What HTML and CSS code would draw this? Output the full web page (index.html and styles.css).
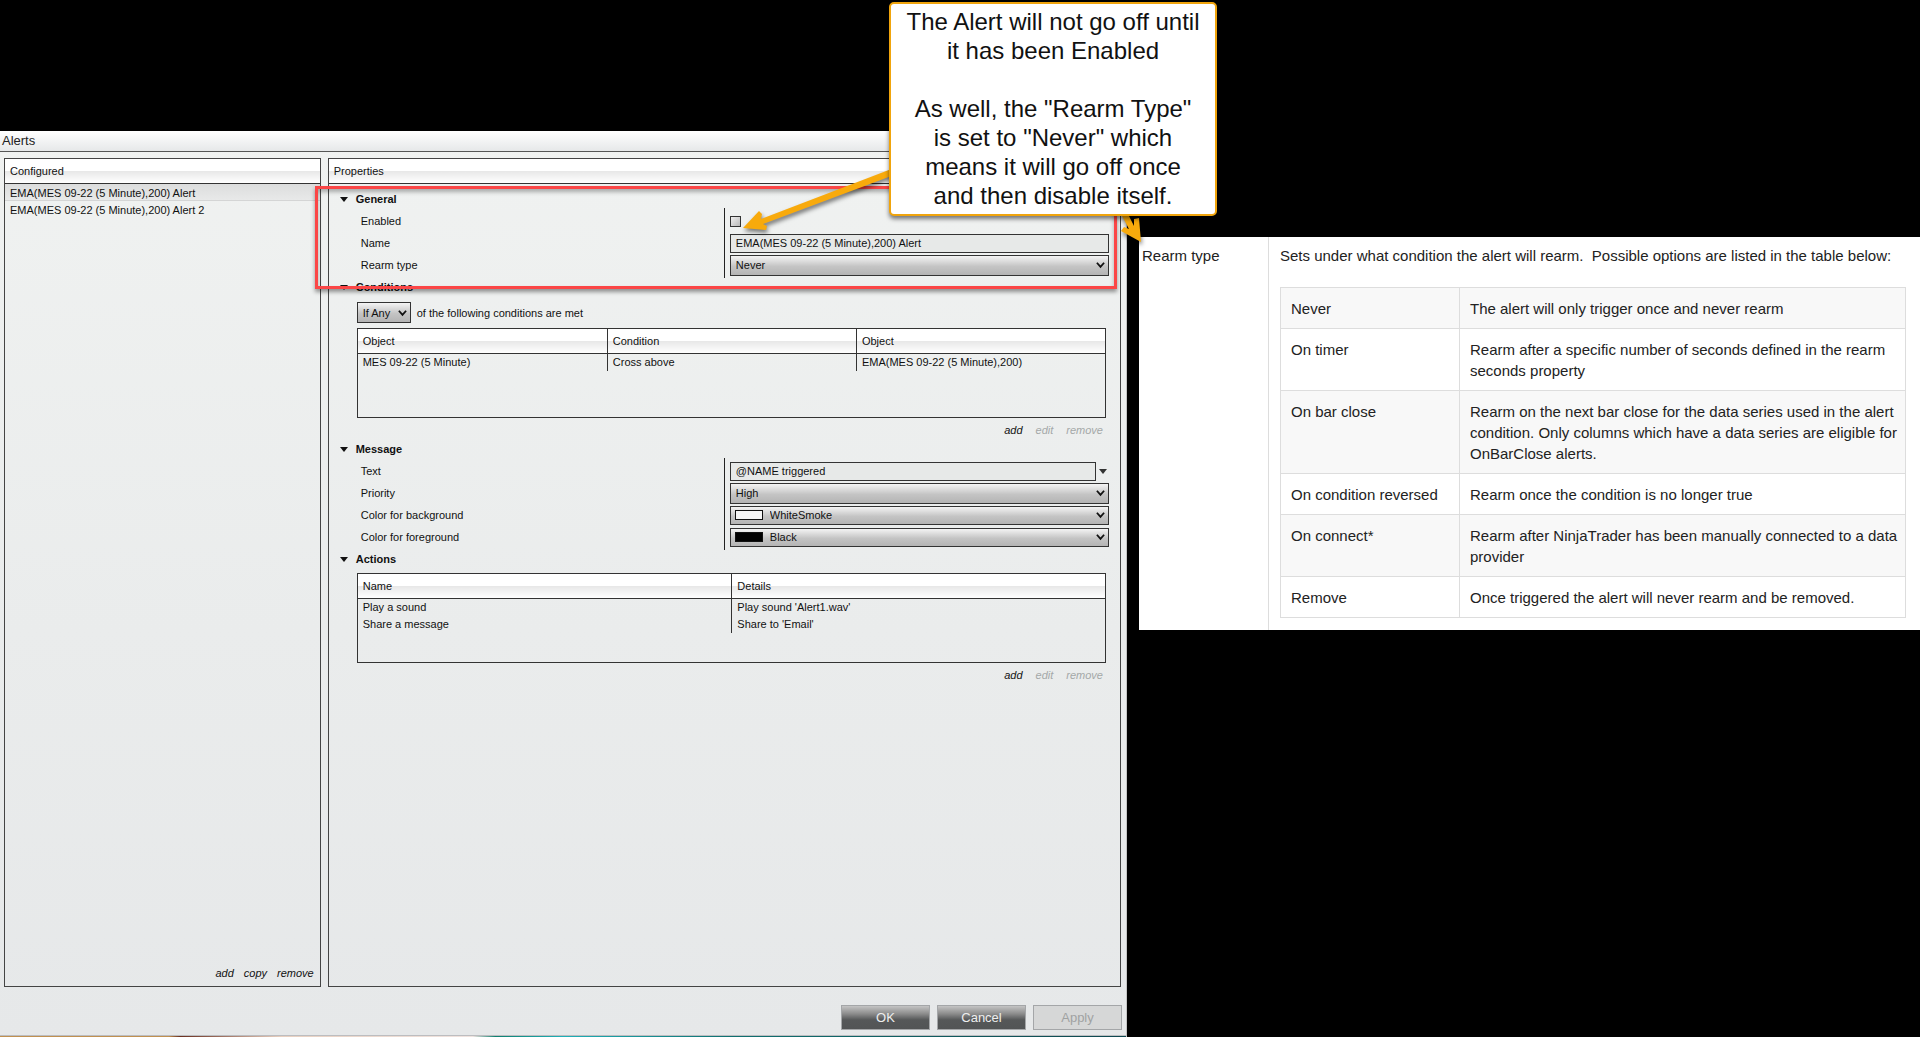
FILE: index.html
```
<!DOCTYPE html>
<html lang="en">
<head>
    <meta charset="UTF-8">
    <meta name="viewport" content="width=device-width, initial-scale=1.0">
    <title>Alerts</title>
    <link rel="stylesheet" href="styles.css">
</head>
<body>
    <main class="workspace">
        <section class="dialog">
            <h1 class="title-bar">Alerts</h1>

            <div class="panels">
                <!-- Configured alerts -->
                <div class="panel configured">
                    <h2 class="panel-header">Configured</h2>
                    <ul class="alert-list">
                        <li class="selected">EMA(MES 09-22 (5 Minute),200) Alert</li>
                        <li>EMA(MES 09-22 (5 Minute),200) Alert 2</li>
                    </ul>
                    <div class="list-links">
                        <a href="#">add</a>
                        <a href="#">copy</a>
                        <a href="#">remove</a>
                    </div>
                </div>

                <!-- Properties of the selected alert -->
                <div class="panel properties">
                    <h2 class="panel-header">Properties</h2>
                    <div class="panel-body">
                        <h3>General</h3>
                        <div class="property-grid">
                            <div class="labels">
                                <label for="enabled">Enabled</label>
                                <label for="name">Name</label>
                                <label for="rearm">Rearm type</label>
                            </div>
                            <div class="values">
                                <div class="field"><input type="checkbox" id="enabled"></div>
                                <div class="field"><input type="text" id="name" value="EMA(MES 09-22 (5 Minute),200) Alert"></div>
                                <div class="field">
                                    <select id="rearm"><option>Never</option></select>
                                    <svg class="chevron" viewBox="0 0 10 8"><path d="M1 1.5L5 6L9 1.5"/></svg>
                                </div>
                            </div>
                        </div>

                        <h3>Conditions</h3>
                        <div class="match-row">
                            <div class="field">
                                <select id="match"><option>If Any</option></select>
                                <svg class="chevron" viewBox="0 0 10 8"><path d="M1 1.5L5 6L9 1.5"/></svg>
                            </div>
                            <label for="match">of the following conditions are met</label>
                        </div>
                        <div class="table-box">
                            <table class="grid-table">
                                <thead>
                                    <tr><th>Object</th><th>Condition</th><th>Object</th></tr>
                                </thead>
                                <tbody>
                                    <tr><td>MES 09-22 (5 Minute)</td><td>Cross above</td><td>EMA(MES 09-22 (5 Minute),200)</td></tr>
                                </tbody>
                            </table>
                        </div>
                        <div class="table-links">
                            <a href="#">add</a>
                            <a href="#" class="disabled">edit</a>
                            <a href="#" class="disabled">remove</a>
                        </div>

                        <h3>Message</h3>
                        <div class="property-grid">
                            <div class="labels">
                                <label for="text">Text</label>
                                <label for="priority">Priority</label>
                                <label for="background">Color for background</label>
                                <label for="foreground">Color for foreground</label>
                            </div>
                            <div class="values">
                                <div class="field with-menu">
                                    <input type="text" id="text" value="@NAME triggered">
                                    <button type="button" class="menu-btn" aria-label="Insert variable"></button>
                                </div>
                                <div class="field">
                                    <select id="priority"><option>High</option></select>
                                    <svg class="chevron" viewBox="0 0 10 8"><path d="M1 1.5L5 6L9 1.5"/></svg>
                                </div>
                                <div class="field color-field">
                                    <select id="background"><option>WhiteSmoke</option></select>
                                    <span class="swatch smoke"></span>
                                    <svg class="chevron" viewBox="0 0 10 8"><path d="M1 1.5L5 6L9 1.5"/></svg>
                                </div>
                                <div class="field color-field">
                                    <select id="foreground"><option>Black</option></select>
                                    <span class="swatch black"></span>
                                    <svg class="chevron" viewBox="0 0 10 8"><path d="M1 1.5L5 6L9 1.5"/></svg>
                                </div>
                            </div>
                        </div>

                        <h3>Actions</h3>
                        <div class="table-box">
                            <table class="grid-table">
                                <thead>
                                    <tr><th>Name</th><th>Details</th></tr>
                                </thead>
                                <tbody>
                                    <tr><td>Play a sound</td><td>Play sound 'Alert1.wav'</td></tr>
                                    <tr><td>Share a message</td><td>Share to 'Email'</td></tr>
                                </tbody>
                            </table>
                        </div>
                        <div class="table-links">
                            <a href="#">add</a>
                            <a href="#" class="disabled">edit</a>
                            <a href="#" class="disabled">remove</a>
                        </div>
                    </div>
                    <div class="highlight"></div>
                </div>
            </div>

            <div class="dialog-buttons">
                <button type="button">OK</button>
                <button type="button">Cancel</button>
                <button type="button" disabled>Apply</button>
            </div>

            <!-- Callout with its two arrows -->
            <div class="callout">
                <svg class="arrows" width="410" height="90" viewBox="738 162 410 90">
                    <path d="M743 228L759 211L762 214L761 219L894 168V175L763 224L767 226L766 230Z"/>
                    <path d="M1120 212H1127L1134 226V219L1139 218L1141 242L1121 231L1124 227L1129 229Z"/>
                </svg>
                <div class="callout-text">
                    <p>The Alert will not go off until it has been Enabled</p>
                    <p>As well, the "Rearm Type" is set to "Never" which means it will go off once and then disable itself.</p>
                </div>
            </div>
        </section>

        <!-- Help text for the rearm types -->
        <section class="help">
            <h2>Rearm type</h2>
            <div class="help-body">
                <p>Sets under what condition the alert will rearm.&nbsp; Possible options are listed in the table below:</p>
                <table class="help-table">
                    <tr><td>Never</td><td>The alert will only trigger once and never rearm</td></tr>
                    <tr><td>On timer</td><td>Rearm after a specific number of seconds defined in the rearm seconds property</td></tr>
                    <tr><td>On bar close</td><td>Rearm on the next bar close for the data series used in the alert condition. Only columns which have a data series are eligible for OnBarClose alerts.</td></tr>
                    <tr><td>On condition reversed</td><td>Rearm once the condition is no longer true</td></tr>
                    <tr><td>On connect*</td><td>Rearm after NinjaTrader has been manually connected to a data provider</td></tr>
                    <tr><td>Remove</td><td>Once triggered the alert will never rearm and be removed.</td></tr>
                </table>
            </div>
        </section>
    </main>
</body>
</html>
```
FILE: styles.css
```
* {
    margin: 0;
    padding: 0;
    box-sizing: border-box;
}

body {
    font-family: 'Liberation Sans', Arial, sans-serif;
    font-size: 11px;
    background-color: #000;
    color: #111;
}

.workspace {
    display: grid;
    grid-template-columns: minmax(0, 1127fr) minmax(0, 781fr);
    column-gap: 12px;
    min-height: 100vh;
    padding-top: 131px;
}

/* Dialog window */
.dialog {
    position: relative;
    display: flex;
    flex-direction: column;
    background: linear-gradient(#f0f2f1, #eaecec 55%, #e6e8e9);
    border-right: 1px solid #c4c4c4;
}

/* Strip of desktop under the window */
.dialog::after {
    content: "";
    height: 1px;
    border-top: 1px solid #bcbdc0;
    background: linear-gradient(90deg, #c09050 15%, #6a3020 16%, #e8d0c0 25%, #f0e4e0 42%, #108070 44%, #20b0b8 50%, #107070 65%, #104850);
}

.title-bar {
    height: 21px;
    padding-left: 2px;
    font-size: 13px;
    font-weight: normal;
    line-height: 20px;
    color: #222;
    background: linear-gradient(#fff, #e6e8e9);
    border-bottom: 1px solid #555;
}

.panels {
    flex: 1;
    display: grid;
    grid-template-columns: minmax(0, 317fr) minmax(0, 794fr);
    column-gap: 7px;
    padding: 6px 5px 0 4px;
}

.panel {
    position: relative;
    display: flex;
    flex-direction: column;
    border: 1px solid #444;
}

.panel-header,
.grid-table th {
    height: 25px;
    font-size: 11px;
    font-weight: normal;
    text-align: left;
    background: linear-gradient(#fff 50%, #e8e8e8 52%, #fff);
    border-bottom: 1px solid #333;
}

.panel-header {
    padding-left: 5px;
    line-height: 24px;
}

/* Configured list */
.alert-list {
    flex: 1;
    list-style: none;
}

.alert-list li {
    height: 17px;
    padding-left: 5px;
    line-height: 18px;
}

.alert-list .selected {
    background: linear-gradient(#dcdddd, #e8e9e9);
    border-bottom: 1px solid #d4d5d5;
}

.list-links,
.table-links {
    display: flex;
    justify-content: flex-end;
    font-style: italic;
}

.list-links {
    gap: 10px;
    padding: 0 6px 7px;
}

a {
    color: #111;
    text-decoration: none;
}

a.disabled {
    color: #a4a8a8;
}

/* Properties */
.panel-body {
    padding: 6px 11px 0 28px;
}

h3 {
    display: flex;
    align-items: center;
    height: 18px;
    margin-left: -17px;
    font-size: 11px;
}

h3::before {
    content: "";
    margin-right: 8px;
    border: 4px solid transparent;
    border-top: 5px solid #111;
    border-bottom: 0;
}

.property-grid {
    display: grid;
    grid-template-columns: minmax(0, 367fr) minmax(0, 385fr);
}

.labels,
.values {
    padding: 2px 0;
}

.labels label {
    display: block;
    height: 22px;
    padding-left: 4px;
    line-height: 22px;
}

.values {
    padding-left: 5px;
    border-left: 1px solid #222;
}

.field {
    position: relative;
    display: flex;
    align-items: center;
    height: 22px;
}

input[type="text"],
select {
    width: 100%;
    height: 19px;
    padding: 0 5px;
    font-family: inherit;
    font-size: 11px;
    color: #111;
    border: 1px solid #333;
    border-radius: 0;
}

input[type="text"] {
    background-color: #e7e9e8;
}

select {
    height: 21px;
    appearance: none;
    background: linear-gradient(#f4f4f4, #c4c4c4 55%, #b4b4b4);
}

input[type="checkbox"] {
    appearance: none;
    width: 11px;
    height: 11px;
    background: linear-gradient(135deg, #f0f0f0, #b8b8b8);
    border: 1px solid #333;
}

.chevron {
    position: absolute;
    right: 4px;
    width: 9px;
    height: 8px;
    fill: none;
    stroke: #111;
    stroke-width: 2;
    pointer-events: none;
}

.with-menu {
    gap: 3px;
}

.menu-btn {
    flex: none;
    width: 10px;
    height: 16px;
    background: none;
    border: 0;
}

.menu-btn::before {
    content: "";
    display: block;
    width: 0;
    border: 4px solid transparent;
    border-top: 5px solid #333;
    border-bottom: 0;
}

.color-field select {
    height: 19px;
    padding-left: 39px;
}

.swatch {
    position: absolute;
    left: 5px;
    width: 28px;
    height: 10px;
    border: 1px solid #111;
}

.smoke {
    background-color: whitesmoke;
}

.black {
    background-color: black;
}

.match-row {
    display: flex;
    align-items: center;
    gap: 6px;
    margin-top: 6px;
    height: 21px;
}

.match-row .field {
    width: 54px;
}

/* Condition and action tables */
.table-box {
    height: 90px;
    margin: 5px 3px 0 0;
    border: 1px solid #333;
}

.grid-table {
    width: 100%;
    table-layout: fixed;
    border-spacing: 0;
}

.grid-table th,
.grid-table td {
    padding-left: 5px;
}

.grid-table td {
    height: 17px;
    line-height: 17px;
}

.grid-table th + th,
.grid-table td + td {
    border-left: 1px solid #333;
}

.table-links {
    gap: 13px;
    height: 22px;
    padding: 6px 6px 0 0;
}

/* Dialog buttons */
.dialog-buttons {
    display: flex;
    justify-content: flex-end;
    gap: 7px;
    padding: 18px 4px 5px;
}

.dialog-buttons button {
    width: 89px;
    height: 25px;
    font-family: inherit;
    font-size: 13px;
    color: #eee;
    background: linear-gradient(#c4c4c4, #8a8a8a 35%, #565859 60%, #525455);
    border: 1px solid #a4a6a8;
}

.dialog-buttons button:disabled {
    color: #a0a2a2;
    background: #d6d7d7;
}

/* Red frame round the General section */
.highlight {
    position: absolute;
    top: 27px;
    left: -14px;
    right: 3px;
    height: 103px;
    border: 3px solid #fb4646;
    box-shadow: 0 3px 4px rgba(0, 0, 0, 0.4), inset 0 3px 4px rgba(0, 0, 0, 0.3);
    pointer-events: none;
}

/* Callout */
.callout {
    position: absolute;
    top: -129px;
    right: -91px;
    width: 328px;
}

.arrows {
    position: absolute;
    top: 160px;
    left: -151px;
    fill: #f8aa0c;
    filter: drop-shadow(1px 3px 2px rgba(0, 0, 0, 0.5));
}

.callout-text {
    position: relative;
    min-height: 214px;
    padding: 3px 13px;
    font-size: 24px;
    line-height: 29px;
    text-align: center;
    background-color: #fff;
    border: 2px solid #f0a40c;
    border-radius: 5px;
    box-shadow: 0 3px 4px rgba(0, 0, 0, 0.5);
}

.callout-text p + p {
    margin-top: 29px;
}

/* Help panel */
.help {
    display: grid;
    grid-template-columns: 130px minmax(0, 1fr);
    align-self: start;
    margin-top: 106px;
    font-size: 15px;
    line-height: 21px;
    color: #222;
    background-color: #fff;
}

.help h2 {
    padding: 8px 3px;
    font-size: 15px;
    font-weight: normal;
    border-right: 1px solid #ddd;
}

.help-body {
    padding: 8px 14px 12px 11px;
}

.help-table {
    width: 100%;
    margin-top: 21px;
    border-collapse: collapse;
}

.help-table td {
    padding: 10px 4px 9px 10px;
    vertical-align: top;
    border: 1px solid #ddd;
}

.help-table td:first-child {
    width: 179px;
}

.help-table tr:nth-child(odd) {
    background-color: #f8f8f8;
}
```
